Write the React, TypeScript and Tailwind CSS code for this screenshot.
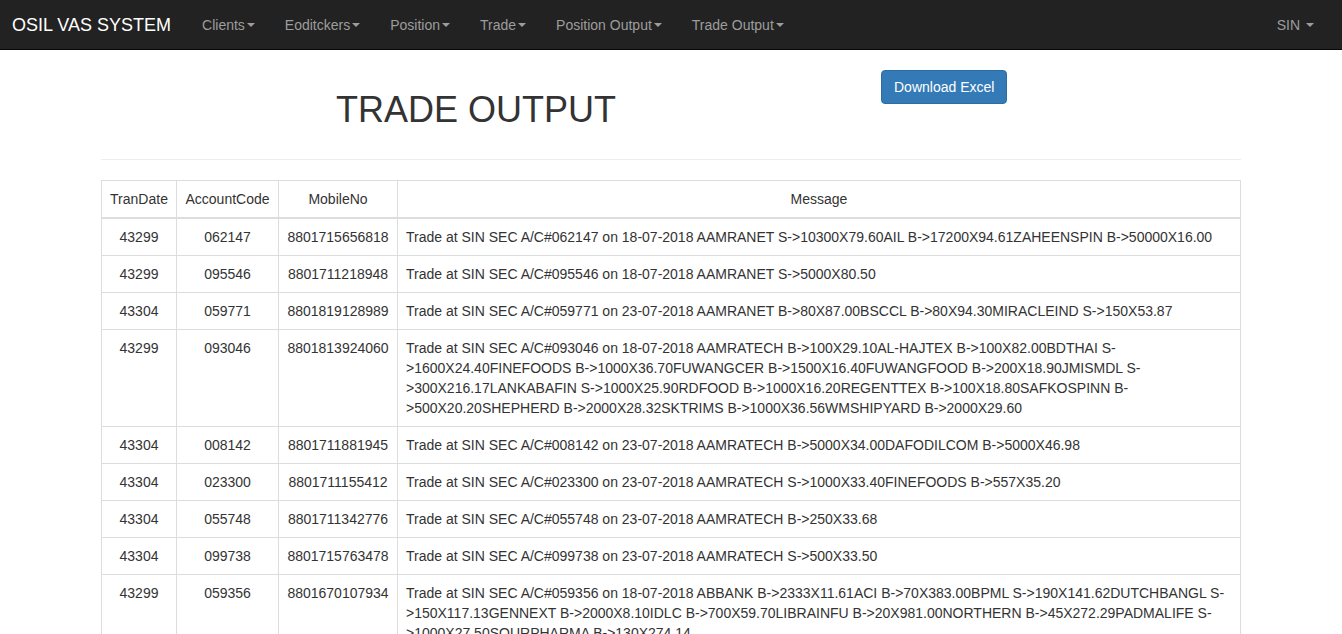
import React from "react";

const rows: [string, string, string, string][] = [
  ["43299", "062147", "8801715656818", "Trade at SIN SEC A/C#062147 on 18-07-2018 AAMRANET S->10300X79.60AIL B->17200X94.61ZAHEENSPIN B->50000X16.00"],
  ["43299", "095546", "8801711218948", "Trade at SIN SEC A/C#095546 on 18-07-2018 AAMRANET S->5000X80.50"],
  ["43304", "059771", "8801819128989", "Trade at SIN SEC A/C#059771 on 23-07-2018 AAMRANET B->80X87.00BSCCL B->80X94.30MIRACLEIND S->150X53.87"],
  ["43299", "093046", "8801813924060", "Trade at SIN SEC A/C#093046 on 18-07-2018 AAMRATECH B->100X29.10AL-HAJTEX B->100X82.00BDTHAI S->1600X24.40FINEFOODS B->1000X36.70FUWANGCER B->1500X16.40FUWANGFOOD B->200X18.90JMISMDL S->300X216.17LANKABAFIN S->1000X25.90RDFOOD B->1000X16.20REGENTTEX B->100X18.80SAFKOSPINN B->500X20.20SHEPHERD B->2000X28.32SKTRIMS B->1000X36.56WMSHIPYARD B->2000X29.60"],
  ["43304", "008142", "8801711881945", "Trade at SIN SEC A/C#008142 on 23-07-2018 AAMRATECH B->5000X34.00DAFODILCOM B->5000X46.98"],
  ["43304", "023300", "8801711155412", "Trade at SIN SEC A/C#023300 on 23-07-2018 AAMRATECH S->1000X33.40FINEFOODS B->557X35.20"],
  ["43304", "055748", "8801711342776", "Trade at SIN SEC A/C#055748 on 23-07-2018 AAMRATECH B->250X33.68"],
  ["43304", "099738", "8801715763478", "Trade at SIN SEC A/C#099738 on 23-07-2018 AAMRATECH S->500X33.50"],
  ["43299", "059356", "8801670107934", "Trade at SIN SEC A/C#059356 on 18-07-2018 ABBANK B->2333X11.61ACI B->70X383.00BPML S->190X141.62DUTCHBANGL S->150X117.13GENNEXT B->2000X8.10IDLC B->700X59.70LIBRAINFU B->20X981.00NORTHERN B->45X272.29PADMALIFE S->1000X27.50SQURPHARMA B->130X274.14"],
];

const Caret = () => (
  <span className="inline-block w-0 h-0 ml-[2px] align-middle border-t-[4px] border-t-current border-x-[4px] border-x-transparent" />
);

const navItems = ["Clients", "Eoditckers", "Position", "Trade", "Position Output", "Trade Output"];

export default function App() {
  return (
    <div className="min-h-screen bg-white text-[14px] leading-[20px] text-[#333]" style={{ fontFamily: '"Liberation Sans", Arial, sans-serif' }}>
      <nav className="h-[50px] bg-[#222] border-b border-[#080808] flex items-center justify-between">
        <div className="flex items-center">
          <span className="pl-[12px] pr-[16px] text-[18px] leading-[20px] text-white">OSIL VAS SYSTEM</span>
          <ul className="flex">
            {navItems.map((n) => (
              <li key={n} className="px-[15px] py-[15px] text-[#9d9d9d] flex items-center">
                {n}
                <Caret />
              </li>
            ))}
          </ul>
        </div>
        <div className="pr-[28px] text-[#9d9d9d] flex items-center">
          SIN <span className="ml-[4px] inline-flex"><Caret /></span>
        </div>
      </nav>

      <div className="w-[1170px] mx-auto px-[15px] pt-[20px]">
        <div className="flex -mx-[15px]">
          <div className="w-[780px] px-[15px] text-center">
            <h1 className="mt-[20px] mb-[10px] text-[36px] leading-[39.6px] font-normal">TRADE OUTPUT</h1>
          </div>
          <div className="w-[390px] px-[15px]">
            <button className="h-[34px] px-[12px] py-[6px] bg-[#337ab7] border border-[#2e6da4] rounded-[4px] text-white text-[14px] leading-[20px]">
              Download Excel
            </button>
          </div>
        </div>
        <hr className="mt-[19px] mb-[20px] border-0 border-t border-[#eee]" />
        <table className="w-full border-collapse border border-[#ddd]">
          <thead>
            <tr>
              <th className="w-[75px] p-[8px] font-normal text-center align-bottom border border-[#ddd] border-b-2">TranDate</th>
              <th className="w-[102px] p-[8px] font-normal text-center align-bottom border border-[#ddd] border-b-2">AccountCode</th>
              <th className="w-[119px] p-[8px] font-normal text-center align-bottom border border-[#ddd] border-b-2">MobileNo</th>
              <th className="p-[8px] font-normal text-center align-bottom border border-[#ddd] border-b-2">Message</th>
            </tr>
          </thead>
          <tbody>
            {rows.map((r) => (
              <tr key={r[1]}>
                <td className="p-[8px] text-center align-top border border-[#ddd]">{r[0]}</td>
                <td className="p-[8px] text-center align-top border border-[#ddd]">{r[1]}</td>
                <td className="p-[8px] text-center align-top border border-[#ddd]">{r[2]}</td>
                <td className="p-[8px] text-left align-top border border-[#ddd]">{r[3]}</td>
              </tr>
            ))}
          </tbody>
        </table>
      </div>
    </div>
  );
}
